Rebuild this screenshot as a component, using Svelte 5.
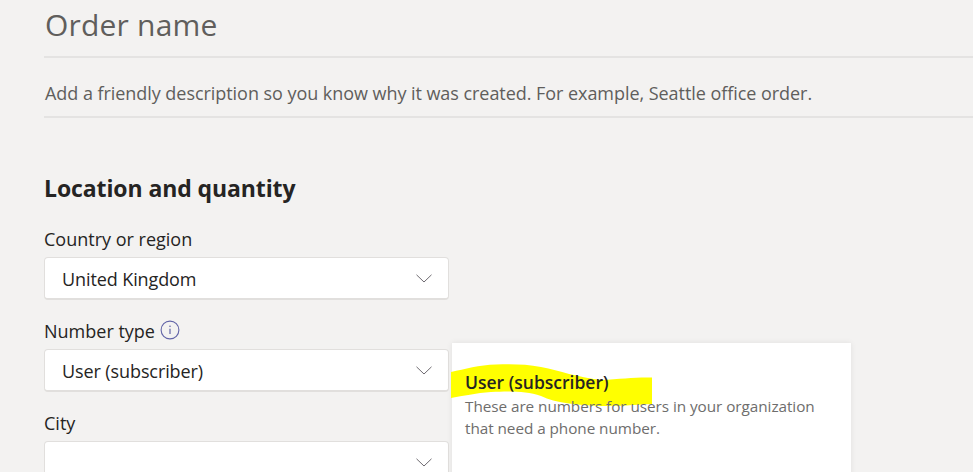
<script>
  const fields = [
    { label: 'Country or region', value: 'United Kingdom' },
    { label: 'Number type', value: 'User (subscriber)', info: true },
    { label: 'City', value: '' }
  ];
</script>

<div class="page">
  <div class="line title">Order name</div>
  <div class="line description">Add a friendly description so you know why it was created. For example, Seattle office order.</div>

  <h2>Location and quantity</h2>

  {#each fields as field}
    <div class="label">
      {field.label}
      {#if field.info}
        <svg class="info" width="20" height="20" viewBox="0 0 20 20" fill="none" stroke="#6264a7">
          <circle cx="10" cy="10" r="8.9" stroke-width="1.1" />
          <path d="M10 8.8v5.2" stroke-width="1.2" />
          <circle cx="10" cy="6.3" r="0.8" fill="#6264a7" stroke="none" />
        </svg>
      {/if}
    </div>
    <div class="select">
      <span>{field.value}</span>
      <svg class="chevron" width="16" height="9" viewBox="0 0 16 9" fill="none" stroke="#6e6a70" stroke-width="1">
        <path d="M0.5 0.8 8 8 15.5 0.8" />
      </svg>
    </div>
  {/each}

  <div class="popover">
    <svg class="marker" width="202" height="44" viewBox="0 0 202 44">
      <path fill="#ffff00" d="M0 10 C14 7 28 3 45 2.500 C60 2 75 2 90 5 C110 9 125 15 150 18 C170 17 185 15 201 15.500 L201 42 C185 43 165 44 149 44 C125 43 105 41 90 34 C75 29 60 29 40 30 C25 31 12 34 0 36 Z" />
    </svg>
    <div class="popover-title">User (subscriber)</div>
    <div class="popover-text">These are numbers for users in your organization that need a phone number.</div>
  </div>
</div>

<style>
  :global(body) {
    margin: 0;
    background: #f3f2f1;
    overflow: hidden;
  }

  .page {
    position: relative;
    height: 472px;
    overflow: hidden;
    padding-left: 44px;
    font-family: "Open Sans", "Noto Sans", sans-serif;
    color: #252423;
    box-sizing: border-box;
  }

  .line {
    border-bottom: 2px solid #e4e3e2;
    padding-left: 1px;
    color: #605e5c;
  }

  .title {
    height: 56px;
    font-size: 30px;
    line-height: 50px;
    letter-spacing: 0.2px;
  }

  .description {
    height: 58px;
    font-size: 18px;
    line-height: 70px;
    letter-spacing: -0.05px;
    white-space: nowrap;
  }

  h2 {
    margin: 53px 0 0;
    font-size: 23px;
    line-height: 34px;
    font-weight: 700;
    letter-spacing: -0.1px;
  }

  .label {
    display: flex;
    align-items: center;
    gap: 5px;
    height: 24px;
    margin-top: 22px;
    font-size: 18px;
  }

  .select {
    display: flex;
    align-items: center;
    justify-content: space-between;
    box-sizing: border-box;
    width: 405px;
    height: 43px;
    margin-top: 6px;
    padding: 0 16px 0 17px;
    background: #fff;
    border: 1px solid #e1dfdd;
    border-bottom-width: 2px;
    border-radius: 4px;
    font-size: 18px;
  }

  .select span {
    padding-top: 2px;
    letter-spacing: -0.1px;
  }

  .select + .label {
    margin-top: 18px;
    padding-top: 1px;
  }

  .chevron {
    flex: none;
  }

  .info {
    flex: none;
    margin-top: -2px;
  }

  .popover {
    position: absolute;
    left: 452px;
    top: 343px;
    width: 399px;
    height: 160px;
    box-sizing: border-box;
    padding: 28px 13px 0;
    background: #fff;
    box-shadow: 0 0 6px rgba(0, 0, 0, 0.08);
  }

  .marker {
    position: absolute;
    left: -1px;
    top: 19px;
  }

  .popover-title {
    position: relative;
    font-size: 17.5px;
    line-height: 22px;
    font-weight: 600;
  }

  .popover-text {
    position: relative;
    margin-top: 2px;
    font-size: 15.3px;
    line-height: 22px;
    letter-spacing: -0.05px;
    color: #6e6d6c;
  }
</style>
